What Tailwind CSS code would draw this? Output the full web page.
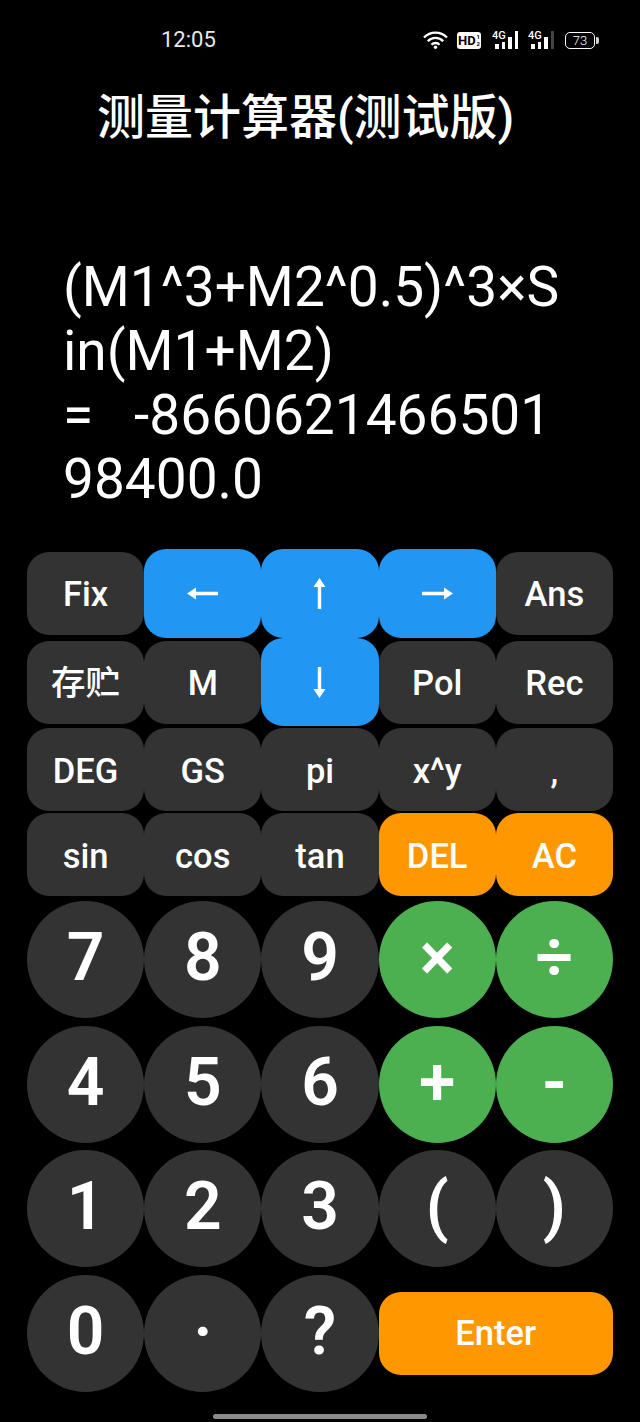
<!DOCTYPE html>
<html>
<head>
    <meta charset="UTF-8">
    <title>测量计算器</title>
    <script src="https://cdn.jsdelivr.net/npm/@tailwindcss/browser@4"></script>
</head>
<body class="bg-black">
<div class="relative w-[640px] h-[1422px] bg-black text-white overflow-hidden font-['Roboto','Noto_Sans_CJK_SC',sans-serif]">
    <!-- status bar -->
    <div class="h-[80px] flex items-center pl-[161px] pb-[1px]">
        <span class="w-[262px] text-[22px] text-[#e8e8e8]">12:05</span>
        <div class="flex items-end h-[18px]">
            <svg width="25" height="18" viewBox="0 0 25 18" fill="none" stroke="#fff" stroke-width="2.400" class="mr-[9px]"><path d="M1 6.500a16 16 0 0 1 23 0M4.800 10.200a10.500 10.500 0 0 1 15.400 0M8.500 13.800a5.500 5.500 0 0 1 8 0"/><circle cx="12.500" cy="16.200" r="1.700" fill="#fff" stroke="none"/></svg>
            <div class="w-[24px] h-[17px] mr-[11px] bg-white rounded-[3px] flex items-center justify-center gap-[1px] text-black font-bold">
                <span class="text-[13px] leading-none">HD</span>
                <span class="flex flex-col text-[6px] leading-[7px]"><span>1</span><span>2</span></span>
            </div>
            <div class="relative w-[26px] h-[18px] mr-[10px] flex items-end gap-[3px] pl-[3px]">
                <span class="absolute left-0 top-[-1px] text-[11px] leading-none font-medium">4G</span>
                <i class="w-[4px] h-[5px] bg-white"></i><i class="w-[4px] h-[7px] bg-white"></i><i class="w-[4px] h-[12px] bg-white"></i><i class="w-[3px] h-[18px] bg-white"></i>
            </div>
            <div class="relative w-[26px] h-[18px] mr-[11px] flex items-end gap-[3px] pl-[3px]">
                <span class="absolute left-0 top-[-1px] text-[11px] leading-none font-medium">4G</span>
                <i class="w-[4px] h-[5px] bg-white"></i><i class="w-[4px] h-[7px] bg-white"></i><i class="w-[4px] h-[12px] bg-white"></i><i class="w-[3px] h-[18px] bg-[#444444]"></i>
            </div>
            <div class="w-[30px] h-[17px] rounded-[5px] border-[1.500px] border-white flex items-center justify-center text-[13px] leading-none font-light">73</div>
            <i class="w-[3px] h-[7px] mb-[5px] ml-[1px] rounded-r-[2px] bg-[#cccccc]"></i>
        </div>
    </div>
    <h1 class="pl-[97px] text-[48px] leading-[76px] font-medium whitespace-nowrap">测量计算器(测试版)</h1>
    <!-- display -->
    <div class="mt-[99px] pl-[63px] text-[55px] leading-[64px] w-[640px] whitespace-nowrap">
        <div>(M1^3+M2^0.5)^3×S</div>
        <div>in(M1+M2)</div>
        <div>=&nbsp;&nbsp;&nbsp;-8660621466501</div>
        <div>98400.0</div>
    </div>
    <!-- keypad -->
    <div class="absolute left-[27px] top-[549px] w-[586px] text-white font-medium">
        <div class="grid grid-cols-5 h-[89px] text-[34.500px]">
            <div class="bg-[#333333] rounded-[22px] my-[3px] pt-[3px] flex items-center justify-center">Fix</div>
            <div class="bg-[#2196f3] rounded-[22px] flex items-center justify-center">
                <svg width="31" height="13" viewBox="0 0 31 13" fill="#fff"><path d="M0 6.500 9 .5V4.800H31v3.400H9v4.300z"/></svg>
            </div>
            <div class="bg-[#2196f3] rounded-[22px] flex items-center justify-center">
                <svg width="13" height="31" viewBox="0 0 13 31" fill="#fff"><path d="M6.500 0l6 9H8.200v22H4.800V9H.5z"/></svg>
            </div>
            <div class="bg-[#2196f3] rounded-[22px] flex items-center justify-center">
                <svg width="31" height="13" viewBox="0 0 31 13" fill="#fff"><path d="M31 6.500 22 .5V4.800H0v3.400h22v4.300z"/></svg>
            </div>
            <div class="bg-[#333333] rounded-[22px] my-[3px] pt-[3px] flex items-center justify-center">Ans</div>
        </div>
        <div class="grid grid-cols-5 h-[89px] text-[34.500px]">
            <div class="bg-[#333333] rounded-[22px] my-[3px] pt-[3px] flex items-center justify-center">存贮</div>
            <div class="bg-[#333333] rounded-[22px] my-[3px] pt-[3px] flex items-center justify-center">M</div>
            <div class="bg-[#2196f3] rounded-[22px] mb-[1px] flex items-center justify-center">
                <svg width="13" height="31" viewBox="0 0 13 31" fill="#fff"><path d="M6.500 31l6-9H8.200V0H4.800v22H.5z"/></svg>
            </div>
            <div class="bg-[#333333] rounded-[22px] my-[3px] pt-[3px] flex items-center justify-center">Pol</div>
            <div class="bg-[#333333] rounded-[22px] my-[3px] pt-[3px] flex items-center justify-center">Rec</div>
        </div>
        <div class="grid grid-cols-5 h-[85px] text-[34.500px]">
            <div class="bg-[#333333] rounded-[22px] my-[1px] pt-[4px] flex items-center justify-center">DEG</div>
            <div class="bg-[#333333] rounded-[22px] my-[1px] pt-[4px] flex items-center justify-center">GS</div>
            <div class="bg-[#333333] rounded-[22px] my-[1px] pt-[4px] flex items-center justify-center">pi</div>
            <div class="bg-[#333333] rounded-[22px] my-[1px] pt-[4px] flex items-center justify-center">x^y</div>
            <div class="bg-[#333333] rounded-[22px] my-[1px] pt-[4px] flex items-center justify-center">,</div>
        </div>
        <div class="grid grid-cols-5 h-[85px] text-[34.500px]">
            <div class="bg-[#333333] rounded-[22px] my-[1px] pt-[4px] flex items-center justify-center">sin</div>
            <div class="bg-[#333333] rounded-[22px] my-[1px] pt-[4px] flex items-center justify-center">cos</div>
            <div class="bg-[#333333] rounded-[22px] my-[1px] pt-[4px] flex items-center justify-center">tan</div>
            <div class="bg-[#ff9800] rounded-[22px] my-[1px] pt-[4px] flex items-center justify-center">DEL</div>
            <div class="bg-[#ff9800] rounded-[22px] my-[1px] pt-[4px] flex items-center justify-center">AC</div>
        </div>
        <div class="grid grid-cols-5 h-[125px] text-[66px] leading-none font-semibold">
            <div class="bg-[#333333] rounded-full flex items-center justify-center h-[117px] mt-[4px] pb-[3px]">7</div>
            <div class="bg-[#333333] rounded-full flex items-center justify-center h-[117px] mt-[4px] pb-[3px]">8</div>
            <div class="bg-[#333333] rounded-full flex items-center justify-center h-[117px] mt-[4px] pb-[3px]">9</div>
            <div class="bg-[#4caf50] rounded-full flex items-center justify-center h-[117px] mt-[4px] pb-[3px]">×</div>
            <div class="bg-[#4caf50] rounded-full flex items-center justify-center h-[117px] mt-[4px] pb-[3px]">÷</div>
        </div>
        <div class="grid grid-cols-5 h-[124px] text-[66px] leading-none font-semibold">
            <div class="bg-[#333333] rounded-full flex items-center justify-center h-[117px] mt-[4px] pb-[3px]">4</div>
            <div class="bg-[#333333] rounded-full flex items-center justify-center h-[117px] mt-[4px] pb-[3px]">5</div>
            <div class="bg-[#333333] rounded-full flex items-center justify-center h-[117px] mt-[4px] pb-[3px]">6</div>
            <div class="bg-[#4caf50] rounded-full flex items-center justify-center h-[117px] mt-[4px] pb-[3px]">+</div>
            <div class="bg-[#4caf50] rounded-full flex items-center justify-center h-[117px] mt-[4px] pb-[3px]">-</div>
        </div>
        <div class="grid grid-cols-5 h-[125px] text-[66px] leading-none font-semibold">
            <div class="bg-[#333333] rounded-full flex items-center justify-center h-[117px] mt-[4px] pb-[3px]">1</div>
            <div class="bg-[#333333] rounded-full flex items-center justify-center h-[117px] mt-[4px] pb-[3px]">2</div>
            <div class="bg-[#333333] rounded-full flex items-center justify-center h-[117px] mt-[4px] pb-[3px]">3</div>
            <div class="bg-[#333333] rounded-full flex items-center justify-center h-[117px] mt-[4px] pb-[3px]">(</div>
            <div class="bg-[#333333] rounded-full flex items-center justify-center h-[117px] mt-[4px] pb-[3px]">)</div>
        </div>
        <div class="grid grid-cols-5 h-[124px] text-[66px] leading-none font-semibold">
            <div class="bg-[#333333] rounded-full flex items-center justify-center h-[117px] mt-[4px] pb-[3px]">0</div>
            <div class="bg-[#333333] rounded-full flex items-center justify-center h-[117px] mt-[4px] pb-[3px]">·</div>
            <div class="bg-[#333333] rounded-full flex items-center justify-center h-[117px] mt-[4px] pb-[3px]">?</div>
            <div class="col-span-2 bg-[#ff9800] rounded-[22px] flex items-center justify-center h-[83px] mt-[21px] text-[34.500px] font-medium">Enter</div>
        </div>
    </div>
    <div class="absolute left-[213px] top-[1414px] w-[214px] h-[5px] rounded-full bg-[#8a8a8a]"></div>
</div>
</body>
</html>
